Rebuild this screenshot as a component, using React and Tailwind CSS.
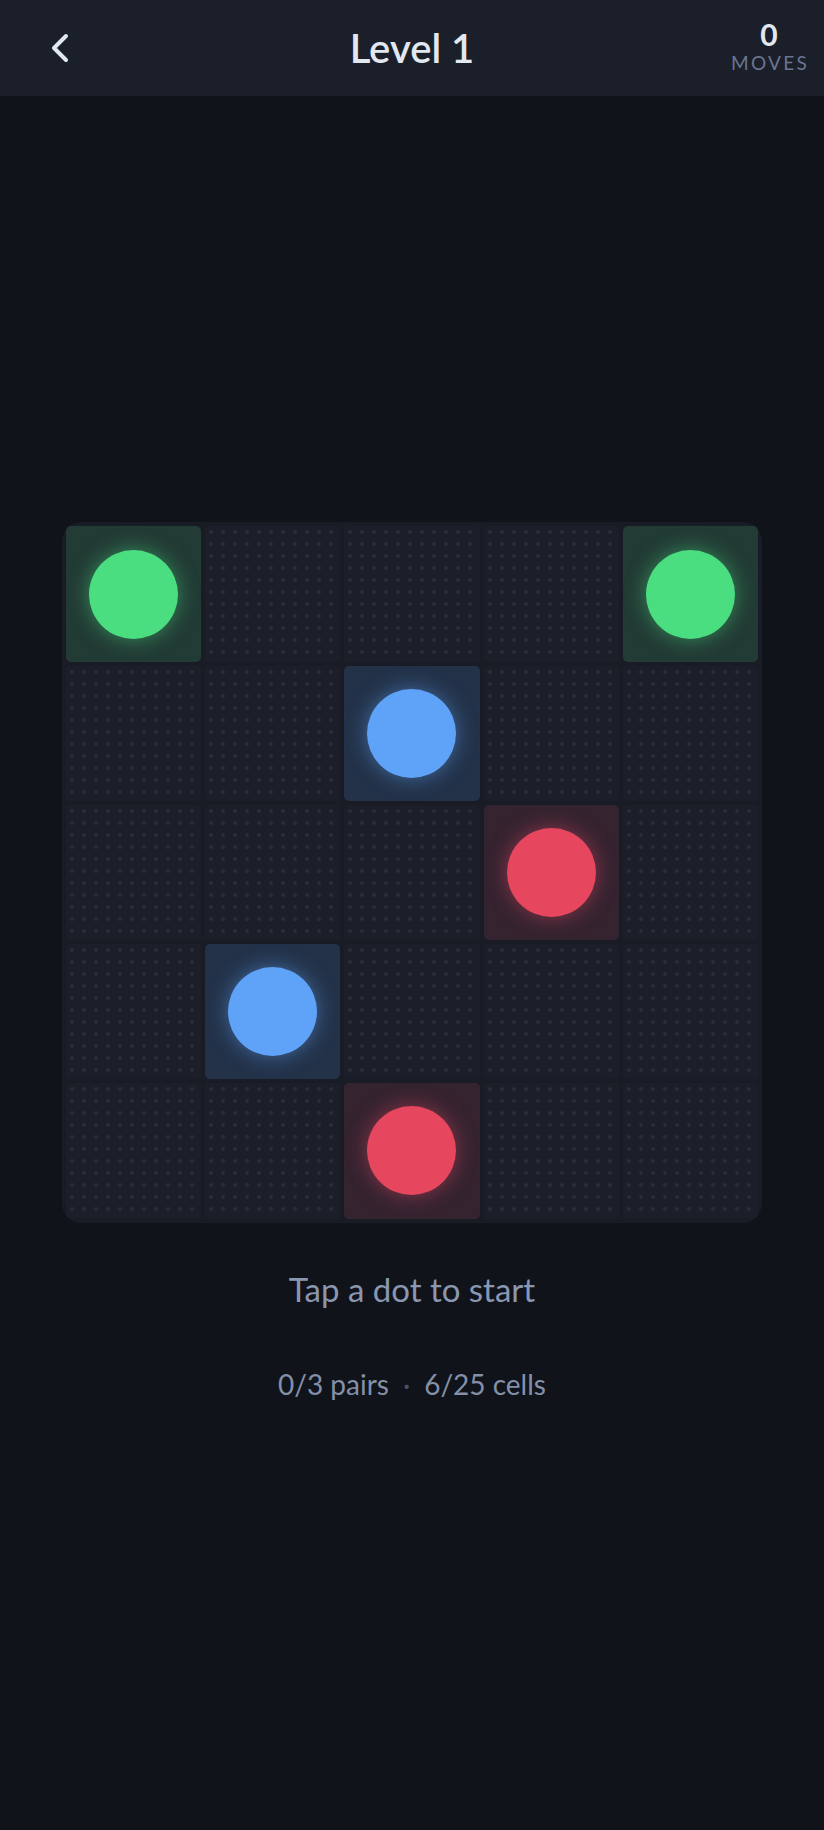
import React from 'react';
import { ChevronLeft } from 'lucide-react';

const board = [
  ['g', null, null, null, 'g'],
  [null, null, 'b', null, null],
  [null, null, null, 'r', null],
  [null, 'b', null, null, null],
  [null, null, 'r', null, null],
];

const tints = {
  g: { cell: 'bg-[#223b35]', dot: 'bg-[#4ade80] shadow-[0_0_20px_rgba(74,222,128,0.5)]' },
  b: { cell: 'bg-[#233249]', dot: 'bg-[#5fa3f9] shadow-[0_0_20px_rgba(96,165,250,0.5)]' },
  r: { cell: 'bg-[#352330]', dot: 'bg-[#e6475f] shadow-[0_0_20px_rgba(230,71,95,0.5)]' },
};

function Cell({ color }) {
  if (!color) {
    return (
      <div className="aspect-square rounded-[4px] bg-[#1c1f29] bg-[radial-gradient(circle,_#282c37_1.7px,_transparent_2.2px)] bg-[length:12px_12px]" />
    );
  }
  const t = tints[color];
  return (
    <div className={`aspect-square rounded-[5px] flex items-center justify-center ${t.cell}`}>
      <div className={`w-[89px] h-[89px] rounded-full ${t.dot}`} />
    </div>
  );
}

export default function App() {
  return (
    <div
      className="h-[1830px] bg-[#10131a] flex flex-col"
      style={{ fontFamily: 'Lato, "Noto Sans", sans-serif' }}
    >
      {/* Header */}
      <header className="h-[96px] shrink-0 bg-[#1b1f2a] grid grid-cols-[1fr_auto_1fr] items-center px-[15px]">
        <button className="ml-[21px] w-12 h-12 flex items-center justify-center text-[#e2e8f0]">
          <ChevronLeft size={48} strokeWidth={2} />
        </button>
        <h1 className="text-[40px] font-semibold text-[#e2e8f0] leading-none">Level 1</h1>
        <div className="justify-self-end mb-[5px] flex flex-col items-center leading-none">
          <span className="text-[30px] font-bold text-[#e2e8f0]">0</span>
          <span className="mt-[4px] text-[19px] tracking-[0.12em] text-[#6b7590] pl-[2px]">MOVES</span>
        </div>
      </header>

      {/* Game */}
      <main className="flex-1 flex flex-col items-center justify-center pb-[6px]">
        <div className="w-[700px] rounded-[20px] bg-[#191c25] p-1 grid grid-cols-5 gap-1">
          {board.flat().map((c, i) => (
            <Cell key={i} color={c} />
          ))}
        </div>

        <p className="mt-[50px] text-[33px] text-[#8a97b0] leading-none">Tap a dot to start</p>

        <div className="mt-[64px] flex items-center gap-[14px] text-[28px] text-[#8390a8] leading-none">
          <span>0/3 pairs</span>
          <span className="text-[#4a5163]">·</span>
          <span>6/25 cells</span>
        </div>
      </main>
    </div>
  );
}
